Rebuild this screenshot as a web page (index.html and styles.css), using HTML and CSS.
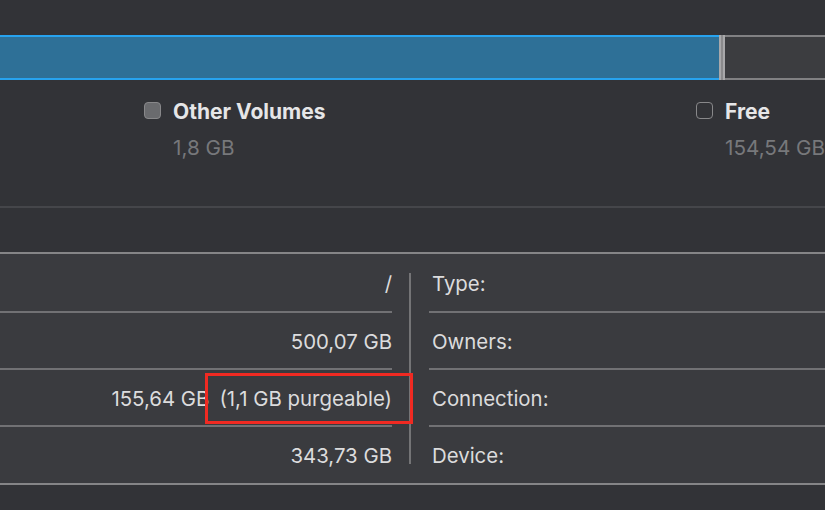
FILE: index.html
```html
<!DOCTYPE html>
<html>
<head>
<meta charset="utf-8">
<link rel="stylesheet" href="styles.css">
</head>
<body>
<div class="page">
  <div class="bar">
    <div class="seg-used"></div>
    <div class="seg-split"></div>
    <div class="seg-free"></div>
  </div>
  <div class="legend">
    <div class="item item-other">
      <span class="check check-filled"></span>
      <div class="item-text">
        <div class="item-title">Other Volumes</div>
        <div class="item-value">1,8 GB</div>
      </div>
    </div>
    <div class="item item-free">
      <span class="check"></span>
      <div class="item-text">
        <div class="item-title">Free</div>
        <div class="item-value">154,54 GB</div>
      </div>
    </div>
  </div>
  <div class="sep"></div>
  <div class="gap"></div>
  <div class="panel">
    <div class="col col-left">
      <div class="row">/</div>
      <div class="row">500,07 GB</div>
      <div class="row">155,64 GB<span class="purge">(1,1 GB purgeable)</span></div>
      <div class="row">343,73 GB</div>
    </div>
    <div class="vline"></div>
    <div class="col col-right">
      <div class="row">Type:</div>
      <div class="row">Owners:</div>
      <div class="row">Connection:</div>
      <div class="row">Device:</div>
    </div>
    <div class="highlight"></div>
  </div>
</div>
</body>
</html>
```
FILE: styles.css
```css
html, body {
  margin: 0;
  padding: 0;
  background: #323337;
}
.page {
  width: 825px;
  height: 510px;
  overflow: hidden;
  background: #323337;
  font-family: Inter, "Liberation Sans", sans-serif;
  color: #dcdcdd;
  display: flex;
  flex-direction: column;
}
.bar {
  margin-top: 35px;
  height: 45px;
  display: flex;
}
.seg-used {
  width: 719px;
  background: #2e7097;
  border-top: 2px solid #27a3ef;
  border-bottom: 2px solid #27a3ef;
}
.seg-split {
  width: 2px;
  background: #8a8a8c;
  border-left: 2px solid #a8a8aa;
  border-right: 2px solid #a8a8aa;
}
.seg-free {
  flex: 1;
  background: #3c3d40;
  border-top: 2px solid #818183;
  border-bottom: 2px solid #818183;
}
.legend {
  height: 126px;
  display: flex;
}
.item {
  display: flex;
  gap: 12px;
  margin-top: 21px;
  flex-shrink: 0;
}
.item-other {
  margin-left: 144px;
  width: 552px;
}
.check {
  width: 15px;
  height: 15px;
  border: 1.5px solid #88888a;
  border-radius: 4px;
  margin-top: 1px;
  box-sizing: content-box;
  flex-shrink: 0;
}
.check-filled {
  background: #6a6b6e;
}
.item-title {
  font-size: 21px;
  font-weight: 700;
  color: #e6e6e7;
  line-height: 22px;
  white-space: nowrap;
}
.item-value {
  font-size: 20.7px;
  color: #77787b;
  margin-top: 14px;
  line-height: 22px;
  white-space: nowrap;
}
.sep {
  height: 2px;
  background: #45464a;
}
.gap {
  height: 44px;
}
.panel {
  position: relative;
  background: #3a3b3f;
  border-top: 2px solid #858587;
  border-bottom: 2px solid #858587;
  display: flex;
  height: 229px;
}
.col {
  display: flex;
  flex-direction: column;
}
.col-left {
  width: 392px;
}
.col-right {
  flex: 1;
}
.row {
  height: 57px;
  display: flex;
  align-items: center;
  padding-top: 2px;
  box-sizing: border-box;
  font-size: 20.4px;
  white-space: nowrap;
  border-top: 2px solid #717174;
}
.row:first-child {
  border-top: none;
}
.col-left .row {
  justify-content: flex-end;
}
.col-right .row {
  padding-left: 3px;
}
.purge {
  margin-left: 10px;
}
.vline {
  width: 2px;
  background: #747476;
  margin: 19px 18px 19px 17px;
}
.highlight {
  position: absolute;
  left: 205px;
  top: 119px;
  width: 202px;
  height: 45px;
  border: 3px solid #f02a22;
}
```
